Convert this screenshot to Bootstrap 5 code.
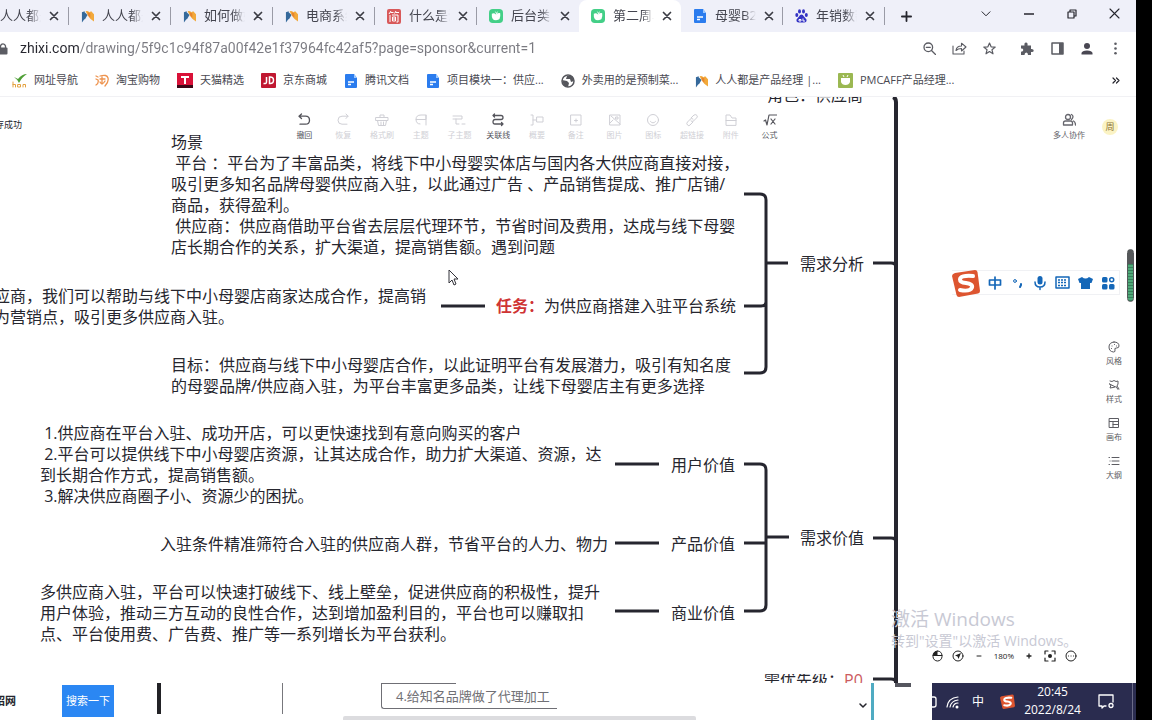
<!DOCTYPE html>
<html lang="zh-CN">
<head>
<meta charset="utf-8">
<meta name="viewport" content="width=device-width, initial-scale=1">
<title>知犀思维导图</title>
<link href="https://cdn.jsdelivr.net/npm/bootstrap@5.3.0/dist/css/bootstrap.min.css" rel="stylesheet">
<style>
  body { background: #000; font-family: "Open Sans", "Noto Sans CJK SC", sans-serif; color: #26262e; }
  button, .plain { background: none; border: 0; padding: 0; color: inherit; }
  svg { display: block; flex: none; }
  .ln { fill: none; stroke: currentColor; stroke-linecap: round; stroke-linejoin: round; }
  .screen { height: 100vh; margin-right: 16px; background: #fff; }

  /* tab strip */
  .tabstrip { height: 32px; background: #eff0f9; }
  .tab { width: 102px; height: 32px; padding-left: 12px; gap: 8px; position: relative; font-size: 13px; color: #44454f; }
  .tab::after { content: ""; position: absolute; right: 0; top: 7px; height: 18px; width: 1px; background: #9a9ba6; }
  .tab.first { width: 69px; padding-left: 0; }
  .tab.current { background: #fff; border-radius: 8px 8px 0 0; }
  .tab.current::after, .tab.quiet::after { display: none; }
  .tab-name { width: 41px; white-space: nowrap; overflow: hidden; -webkit-mask-image: linear-gradient(90deg, #000 70%, transparent); mask-image: linear-gradient(90deg, #000 70%, transparent); }
  .tab-x { color: #3b3c44; }
  .winbtn { width: 43px; height: 27px; }

  /* address row */
  .addr { height: 33px; color: #5b5c63; }
  .url { flex: 1; min-width: 0; font-family: Roboto, "Noto Sans CJK SC", sans-serif; font-size: 14px; border: 0; outline: 0; padding: 0; -webkit-text-fill-color: transparent; background: linear-gradient(90deg, #26262e 59px, #7a7a81 59px); -webkit-background-clip: text; background-clip: text; }
  .addr button { width: 30px; }

  /* bookmarks */
  .marks { height: 31px; gap: 17px; padding-left: 12px; font-size: 11px; }
  .marks a { color: #4a4a52; text-decoration: none; gap: 7px; white-space: nowrap; }

  /* mind map canvas */
  .board { border-top: 1px solid #f1f1f4; }
  .wires { position: absolute; left: 0; top: 0; color: #26262f; }
  .node { position: absolute; font-size: 16px; line-height: 21px; white-space: pre; margin: 0; }
  .n-role { left: 767px; top: -12px; }
  .n-title { left: 171px; top: 35px; }
  .n-scene { left: 171px; top: 56px; }
  .n-help { left: -6px; top: 189px; }
  .n-task { left: 496px; top: 199px; }
  .n-task b { color: #cf3434; }
  .n-goal { left: 171px; top: 258px; }
  .n-need { left: 800px; top: 157px; }
  .n-user { left: 40px; top: 326px; }
  .n-worth { left: 800px; top: 431px; }
  .n-v1 { left: 671px; top: 358px; }
  .n-v2 { left: 671px; top: 437px; }
  .n-v3 { left: 671px; top: 506px; }
  .n-enter { left: 160px; top: 437px; }
  .n-many { left: 40px; top: 485px; }
  .n-rank { left: 764px; top: 577px; height: 9px; line-height: 12px; overflow: hidden; }
  .n-rank span { color: #cc5a60; }

  .saved { position: absolute; left: -5px; top: 22px; font-size: 9px; line-height: 12px; }
  .tools { position: absolute; left: 285px; top: 16px; width: 504px; font-size: 8px; line-height: 12px; }
  .tools button { flex: 1 1 0; color: #cfcfd5; }
  .tools button.on { color: #55555c; }
  .tools svg, .rail svg, .team svg { margin: 0 auto 2px; }
  .team { position: absolute; right: 18px; top: 16px; gap: 17px; font-size: 8px; line-height: 12px; color: #66666d; }
  .face { width: 16px; height: 16px; border-radius: 50%; background: #fbf3c4; color: #8b7436; font-size: 9px; line-height: 16px; }
  .ime { position: absolute; right: 16px; top: 173px; width: 168px; height: 25px; color: #1467b8; border: 1px solid #f0f1f4; border-left: 0; }
  .ime button { width: 23px; }
  .rail { position: absolute; right: 14px; top: 244px; gap: 12px; font-size: 8px; line-height: 12px; color: #5c5c62; }
  .level { position: absolute; right: 2px; top: 152px; width: 7px; height: 53px; border-radius: 4px; border: 1px solid #55585a; background: linear-gradient(#55585a 14px, transparent 14px), repeating-linear-gradient(#4fa878 0 2px, #37805a 2px 3px); }
  .mark-win { position: absolute; left: 891px; top: 508px; color: #c8c9d4; }
  .mark-win p { margin: 0; font-size: 19px; line-height: 28px; white-space: nowrap; }
  .mark-win p + p { font-size: 14px; line-height: 16px; }
  .zoomer { position: absolute; right: 59px; top: 551px; font-size: 8px; line-height: 16px; gap: 9px; color: #222; }
  .pointer { position: absolute; left: 448px; top: 172px; }

  /* bottom strip */
  .strip { height: 37px; position: relative; }
  .site { width: 62px; margin-left: -6px; font-size: 11px; font-weight: 700; white-space: nowrap; margin-right: 6px; }
  .go { width: 52px; height: 32px; margin-top: 2px; background: #2b87f3; color: #fff; font-size: 11px; }
  .bar-a { width: 4px; height: 31px; margin-left: 43px; background: #222226; }
  .bar-b { width: 1px; height: 31px; margin-left: 121px; background: #77777c; }
  .note { width: 176px; height: 26px; margin-left: 98px; border: solid #6f6f75; border-width: 0 0 1px 1px; border-radius: 0 0 0 3px; font-size: 13px; line-height: 26px; padding-left: 14px; color: #707075; position: relative; white-space: nowrap; }
  .note::before { content: ""; position: absolute; left: 0; top: 0; width: 74px; height: 1px; background: #6f6f75; }
  .hscroll { position: absolute; left: 343px; bottom: 0; width: 353px; height: 4px; background: #dcdcdf; border-radius: 2px 2px 0 0; }
  .cyan { width: 3px; margin-left: 4px; margin-right: 21px; background: #4fabc2; }
  .stub { width: 16px; height: 4px; background: #55565f; margin-right: 21px; }
  .tray { width: 204px; background: #2a2c4f; color: #fff; font-size: 12px; }
  .tray time { line-height: 18px; width: 66px; white-space: nowrap; }
  .peek { width: 1px; background: #6a6b87; margin-left: 18px; margin-right: 3px; }
</style>
</head>
<body>
<svg width="0" height="0" class="position-absolute">
  <defs>
    <symbol id="x" viewBox="0 0 10 10"><path class="ln" stroke-width="1.7" d="M1.5 1.5l7 7M8.5 1.5l-7 7"/></symbol>
    <symbol id="pm" viewBox="0 0 14 14"><path fill="#f2a93b" d="M5 2q2-1 4 1l2-1 3 3v8l-4-3-3-4z"/><path fill="#35699b" d="M1 3l3-1v8l-3 4zM4 3l3 3-3 5z"/><path fill="#e8842e" d="M7 3l3 1v5L8 7z"/></symbol>
    <symbol id="doc" viewBox="0 0 14 14"><path fill="#2b7cee" d="M2 0h8l3 4v9q0 1-1 1H2q-1 0-1-1V1q0-1 1-1z"/><path fill="#9cc8ff" d="M10 0v4h3z"/><path stroke="#fff" stroke-width="1.3" d="M4 8h6M4 10.500h3"/></symbol>
    <symbol id="leaf" viewBox="0 0 15 15"><rect width="15" height="15" rx="4" fill="#43cf87"/><path fill="#fff" d="M3 5q3-1 4.500 1q2-2 4.500-1.500Q13 12 7.500 12 2.500 12 3 5z"/><path fill="#fff" d="M6 2l2 2 2-2-2 4z"/></symbol>
    <symbol id="sg" viewBox="0 0 28 28"><path fill="#dd5530" d="M3 4L23 1q2 0 2.500 2L28 22q0 2-2 2.500L7 28q-2 0-2.500-2L0 7q0-2 3-3z"/><path fill="none" stroke="#fff" stroke-width="4" stroke-linecap="round" d="M21 7Q8 6 8 10.500q0 3 6 3.500 7 1 6 4.500Q18 23 8 21"/></symbol>
  </defs>
</svg>

<div class="screen d-flex flex-column overflow-hidden position-relative">
  <header>
    <div class="tabstrip d-flex align-items-center overflow-hidden">
      <div class="tab first d-flex align-items-center"><span class="tab-name">人人都是</span><button class="tab-x" aria-label="关闭"><svg width="10" height="10"><use href="#x"/></svg></button></div>
      <div class="tab d-flex align-items-center"><svg width="13" height="14"><use href="#pm"/></svg><span class="tab-name">人人都是</span><button class="tab-x" aria-label="关闭"><svg width="10" height="10"><use href="#x"/></svg></button></div>
      <div class="tab d-flex align-items-center"><svg width="13" height="14"><use href="#pm"/></svg><span class="tab-name">如何做好</span><button class="tab-x" aria-label="关闭"><svg width="10" height="10"><use href="#x"/></svg></button></div>
      <div class="tab d-flex align-items-center"><svg width="13" height="14"><use href="#pm"/></svg><span class="tab-name">电商系统</span><button class="tab-x" aria-label="关闭"><svg width="10" height="10"><use href="#x"/></svg></button></div>
      <div class="tab d-flex align-items-center"><svg width="14" height="15" viewBox="0 0 14 15"><rect width="14" height="15" rx="2" fill="#d8595a"/><path fill="none" stroke="#fff" d="M4 2L2 5M3.500 3.500h3M9 2L7.500 4.500M8.500 3.500H12M3 6v7M5 6h6v7H9.500M5.500 8h3v4h-3zM5.500 10h3"/></svg><span class="tab-name">什么是淘</span><button class="tab-x" aria-label="关闭"><svg width="10" height="10"><use href="#x"/></svg></button></div>
      <div class="tab quiet d-flex align-items-center"><svg width="14" height="14"><use href="#leaf"/></svg><span class="tab-name">后台类目</span><button class="tab-x" aria-label="关闭"><svg width="10" height="10"><use href="#x"/></svg></button></div>
      <div class="tab current d-flex align-items-center"><svg width="14" height="14"><use href="#leaf"/></svg><span class="tab-name">第二周早</span><button class="tab-x" aria-label="关闭"><svg width="10" height="10"><use href="#x"/></svg></button></div>
      <div class="tab d-flex align-items-center"><svg width="14" height="14"><use href="#doc"/></svg><span class="tab-name">母婴B2B</span><button class="tab-x" aria-label="关闭"><svg width="10" height="10"><use href="#x"/></svg></button></div>
      <div class="tab d-flex align-items-center"><svg width="13" height="14" viewBox="0 0 13 14" fill="#3433c4"><ellipse cx="1.800" cy="6" rx="1.500" ry="2"/><ellipse cx="4.500" cy="2.400" rx="1.500" ry="2.100"/><ellipse cx="8.500" cy="2.400" rx="1.500" ry="2.100"/><ellipse cx="11.300" cy="6" rx="1.500" ry="2"/><path d="M6.500 5.500q1.500 0 2.500 2l2.500 3q.5 3-2.500 3H4q-3 0-2.500-3l2.500-3q1-2 2.500-2z"/><path stroke="#fff" fill="none" d="M4 10.500h2V12H4zM8 9.500v2.500h2"/></svg><span class="tab-name">年销数额</span><button class="tab-x" aria-label="关闭"><svg width="10" height="10"><use href="#x"/></svg></button></div>
      <button class="ms-3" aria-label="新标签页"><svg width="11" height="11" viewBox="0 0 11 11"><path class="ln" stroke-width="1.800" d="M5.500 .9v9.200M.9 5.500h9.200"/></svg></button>
      <div class="ms-auto d-flex align-self-start">
        <button class="winbtn d-flex align-items-center justify-content-center" aria-label="搜索标签页"><svg width="10" height="6" viewBox="0 0 10 6"><path class="ln" d="M1 .8l4 4 4-4"/></svg></button>
        <button class="winbtn d-flex align-items-center justify-content-center" aria-label="最小化"><svg width="10" height="2"><path stroke="currentColor" stroke-width="1.500" d="M0 1h10"/></svg></button>
        <button class="winbtn d-flex align-items-center justify-content-center" aria-label="还原"><svg width="10" height="10" viewBox="0 0 10 10"><path class="ln" stroke-width="1.200" d="M1 3h6v6H1zM3 3V1h6v6H7"/></svg></button>
        <button class="winbtn d-flex align-items-center justify-content-center" aria-label="关闭窗口"><svg width="11" height="11" viewBox="0 0 11 11"><path class="ln" stroke-width="1.100" d="M1 1l9 9M10 1l-9 9"/></svg></button>
      </div>
    </div>

    <div class="addr d-flex align-items-center">
      <svg class="me-2" width="8" height="12" viewBox="0 0 8 12"><path fill="currentColor" d="M0 4.500h6.500q1 0 1 1v5q0 1-1 1H0z"/><path class="ln" stroke-width="1.300" d="M5.500 5V3Q5 .8 3 .8 1 .8 .5 3v2"/></svg>
      <input class="url ms-1" aria-label="地址" value="zhixi.com/drawing/5f9c1c94f87a00f42e1f37964fc42af5?page=sponsor&amp;current=1">
      <button class="d-flex justify-content-center" aria-label="缩放"><svg width="13" height="13" viewBox="0 0 13 13"><g class="ln" stroke-width="1.300"><circle cx="5.300" cy="5.300" r="4.300"/><path d="M8.500 8.500l4 4M3.300 5.300h4"/></g></svg></button>
      <button class="d-flex justify-content-center" aria-label="分享"><svg width="15" height="13" viewBox="0 0 15 13"><path class="ln" stroke-width="1.100" d="M1 4v8h11V9M4 8.500Q4.500 4 9.500 4V1.200L14 5l-4.500 4V6.500Q6 6.500 4 8.500z"/></svg></button>
      <button class="d-flex justify-content-center me-2" aria-label="收藏"><svg width="13" height="13" viewBox="0 0 13 13"><path class="ln" stroke-width="1.200" d="M6.500 1l1.600 3.800 4.100.3L9 7.800l1 4-3.500-2.200L3 11.800l1-4L.8 5.100l4.100-.3z"/></svg></button>
      <button class="d-flex justify-content-center" aria-label="扩展程序"><svg width="14" height="14" viewBox="0 0 14 14"><path fill="currentColor" d="M1 3.500h3.500Q4 .6 6 .6t1.500 2.900H11V7q2.700-.3 2.700 1.600T11 10v3H8q0-2.500-1.700-2.500T4.500 13H1V9.700Q3.300 9.500 3.300 8T1 6.600z"/></svg></button>
      <button class="d-flex justify-content-center" aria-label="侧边栏"><svg width="13" height="13" viewBox="0 0 13 13"><path class="ln" stroke-width="1.500" d="M1 1h11v11H1z"/><path fill="currentColor" d="M8 1h4v11H8z"/></svg></button>
      <button class="d-flex justify-content-center" aria-label="用户"><svg width="14" height="14" viewBox="0 0 14 14" fill="#494752"><circle cx="7" cy="4" r="3"/><path d="M1.500 12.500V11Q2 8.500 7 8.500t5.500 2.500v1.500z"/></svg></button>
      <button class="d-flex justify-content-center me-1 pe-1" aria-label="菜单"><svg width="3" height="13" viewBox="0 0 3 13" fill="currentColor"><circle cx="1.500" cy="1.800" r="1.300"/><circle cx="1.500" cy="6.500" r="1.300"/><circle cx="1.500" cy="11.200" r="1.300"/></svg></button>
    </div>

    <nav class="marks d-flex align-items-center">
      <a class="d-flex align-items-center" href="#"><svg width="15" height="14" viewBox="0 0 15 14"><path fill="#4f9f36" d="M2 3l4 2q4-5 9-5-5 3-8 9Q5 5 2 3z"/><path fill="none" stroke="#e3a13f" stroke-linecap="round" d="M1 8v5M1 10.500h2.500V13M6 10.500h2.500V13H6zM11 13v-2.500h2.500V13"/></svg>网址导航</a>
      <a class="d-flex align-items-center" href="#"><svg width="14" height="13" viewBox="0 0 14 13"><g fill="none" stroke="#ee934e" stroke-width="1.300" stroke-linecap="round"><path d="M1 2l2 1M1 5l2 1M1 11q3-2 2-5M5 2Q12 0 13 4t-3 8M5 5h5M7 3v7M5 8q2 4 5-1"/></g></svg>淘宝购物</a>
      <a class="d-flex align-items-center" href="#"><svg width="16" height="15" viewBox="0 0 16 15"><rect width="16" height="15" fill="#d91138"/><path fill="#3c0716" d="M0 12h16v3H0z"/><path stroke="#fff" stroke-width="2" d="M4 4h8M8 4v7"/></svg>天猫精选</a>
      <a class="d-flex align-items-center" href="#"><svg width="15" height="15" viewBox="0 0 15 15"><rect width="15" height="15" rx="1" fill="#c01831"/><path fill="none" stroke="#fff" stroke-width="1.500" d="M5.500 4v5q0 2-3 1.500M8.500 4v6.500q4 .5 4-3.200T8.500 4z"/></svg>京东商城</a>
      <a class="d-flex align-items-center" href="#"><svg width="14" height="14"><use href="#doc"/></svg>腾讯文档</a>
      <a class="d-flex align-items-center" href="#"><svg width="14" height="14"><use href="#doc"/></svg>项目模块一：供应...</a>
      <a class="d-flex align-items-center" href="#"><svg width="14" height="14" viewBox="0 0 14 14"><circle cx="7" cy="7" r="6" fill="#fff" stroke="#55565c" stroke-width="1.500"/><path fill="#55565c" d="M1 6l5 1 2 2-1 4-4-1zM6 2l5 0 2 5-3 1-1-3-4 0z"/></svg>外卖用的是预制菜...</a>
      <a class="d-flex align-items-center" href="#"><svg width="13" height="14"><use href="#pm"/></svg>人人都是产品经理 |...</a>
      <a class="d-flex align-items-center" href="#"><svg width="15" height="15" viewBox="0 0 15 15"><rect width="15" height="15" rx="1" fill="#9bb852"/><path fill="#fff" d="M3 5h9v4q-1 3-4.500 3T3 9z"/><path stroke="#fff" d="M5 2l1 2M10 2L9 4"/></svg>PMCAFF产品经理...</a>
      <button class="ms-auto me-3" aria-label="更多书签"><svg width="8" height="7" viewBox="0 0 8 7"><path class="ln" stroke-width="1.200" d="M1 1l2.500 2.500L1 6M4.500 1L7 3.500 4.500 6"/></svg></button>
    </nav>
  </header>

  <main class="board flex-grow-1 position-relative overflow-hidden">
    <svg class="wires ln" width="920" height="590" viewBox="0 0 920 590" stroke-width="3">
      <g stroke-linecap="butt">
        <path stroke-width="4" d="M893 0q3 1 3 5v583"/>
        <path d="M873 166h18q5 0 5 4M873 441h18q5 0 5 4M873 582h18q5 0 5 4"/>
        <path d="M744 97h16q6 0 6 6v167q0 6-6 6h-16M744 209h17q5 0 5-4M766 166h22"/>
        <path d="M744 367h16q6 0 6 6v135q0 6-6 6h-16M744 446h22M766 440h23"/>
        <path d="M441 209h44M615 367h44M615 446h44M615 514h44"/>
      </g>
    </svg>

    <p class="node n-role">角色：供应商</p>
    <p class="node n-title">场景</p>
    <p class="node n-scene"> 平台 ：平台为了丰富品类，将线下中小母婴实体店与国内各大供应商直接对接，
吸引更多知名品牌母婴供应商入驻，以此通过广告 、产品销售提成、推广店铺/
商品，获得盈利。
 供应商：供应商借助平台省去层层代理环节，节省时间及费用，达成与线下母婴
店长期合作的关系，扩大渠道，提高销售额。遇到问题</p>
    <p class="node n-help">应商，我们可以帮助与线下中小母婴店商家达成合作，提高销
为营销点，吸引更多供应商入驻。</p>
    <p class="node n-task"><b>任务：</b>为供应商搭建入驻平台系统</p>
    <p class="node n-goal">目标：供应商与线下中小母婴店合作，以此证明平台有发展潜力，吸引有知名度
的母婴品牌/供应商入驻，为平台丰富更多品类，让线下母婴店主有更多选择</p>
    <p class="node n-need">需求分析</p>
    <p class="node n-user"> 1.供应商在平台入驻、成功开店，可以更快速找到有意向购买的客户
 2.平台可以提供线下中小母婴店资源，让其达成合作，助力扩大渠道、资源，达
到长期合作方式，提高销售额。
 3.解决供应商圈子小、资源少的困扰。</p>
    <p class="node n-v1">用户价值</p>
    <p class="node n-v2">产品价值</p>
    <p class="node n-v3">商业价值</p>
    <p class="node n-worth">需求价值</p>
    <p class="node n-enter">入驻条件精准筛符合入驻的供应商人群，节省平台的人力、物力</p>
    <p class="node n-many">多供应商入驻，平台可以快速打破线下、线上壁垒，促进供应商的积极性，提升
用户体验，推动三方互动的良性合作，达到增加盈利目的，平台也可以赚取扣
点、平台使用费、广告费、推广等一系列增长为平台获利。</p>
    <p class="node n-rank">需优先级：<span>P0</span></p>

    <div class="saved">存成功</div>

    <div class="tools d-flex">
      <button class="on"><svg width="14" height="14" viewBox="0 0 14 14"><path class="ln" stroke-width="1.300" d="M4.500 1L2 3.200l2.500 2.300M2 3.200h6.500q4 0 4 4t-4 4H3"/></svg>撤回</button>
      <button><svg width="14" height="14" viewBox="0 0 14 14"><path class="ln" d="M10 1l2 2.200-2 2.300M12 3.200H6q-4 0-4 4t4 4h5"/></svg>恢复</button>
      <button><svg width="14" height="14" viewBox="0 0 14 14"><path class="ln" d="M5 4V2h4v2M1 4.500h12v3H1zM2.500 7.500l1 5h7l1-5M6 9v3M8.500 9v3"/></svg>格式刷</button>
      <button><svg width="14" height="14" viewBox="0 0 14 14"><path class="ln" d="M12 2H7Q2 2 2 6.500h10V2v10M2 6.500Q2 11 6 11"/></svg>主题</button>
      <button><svg width="14" height="14" viewBox="0 0 14 14"><path class="ln" d="M1 3h9v3H1M4 6v5h3M10 11h3"/></svg>子主题</button>
      <button class="on"><svg width="14" height="14" viewBox="0 0 14 14"><path class="ln" stroke-width="1.300" d="M3.500 1L2 2.500 3.500 4M2 2.500h8q2 0 2 2t-2 2H4q-2 0-2 2.300T4 11h8M10.500 9.500L12 11l-1.500 1.500"/></svg>关联线</button>
      <button><svg width="14" height="14" viewBox="0 0 14 14"><path class="ln" d="M1 2h2v10H1M3 7h3M7 4h6v5H7z"/></svg>概要</button>
      <button><svg width="14" height="14" viewBox="0 0 14 14"><path class="ln" d="M2 2h10v10H2zM7 6v3M5.500 7.500h3"/></svg>备注</button>
      <button><svg width="14" height="14" viewBox="0 0 14 14"><path class="ln" d="M2 2h10v10H2zM3 3l9 8M2 10l3-3M8 4h2v2H8z"/></svg>图片</button>
      <button><svg width="14" height="14" viewBox="0 0 14 14"><g class="ln"><circle cx="7" cy="7" r="5.500"/><path d="M4.500 8.500q2.500 3 5 0"/></g></svg>图标</button>
      <button><svg width="14" height="14" viewBox="0 0 14 14"><path class="ln" d="M6 5l3-3q2-1 3 .5T11.500 5l-3 3Q7 9 6 8M8 6Q6.500 5 5.500 6l-3 3Q1 10.500 2.500 12T5 12l3-3"/></svg>超链接</button>
      <button><svg width="14" height="14" viewBox="0 0 14 14"><path class="ln" d="M2 12V2h4l2 3h4v7zM2 7.500h10"/></svg>附件</button>
      <button class="on"><svg width="14" height="14" viewBox="0 0 14 14"><path class="ln" stroke-width="1.200" d="M1 8l1.500-1L4 12 6 2h8M8 6l4 5M12 6l-4 5"/></svg>公式</button>
    </div>

    <div class="team d-flex align-items-center">
      <button><svg width="14" height="14" viewBox="0 0 14 14"><g class="ln" stroke-width="1.300"><circle cx="6" cy="4" r="2.500"/><path d="M1.500 12V10q0-2 2-2h5q2 0 2 2v2zM9.500 1.500q3 2 0 5M11.500 8q2 1 2 4"/></g></svg>多人协作</button>
      <span class="face text-center">周</span>
    </div>

    <div class="ime d-flex align-items-center">
      <svg class="me-1" width="28" height="28"><use href="#sg"/></svg>
      <button class="d-flex justify-content-center" aria-label="中文"><svg width="14" height="14" viewBox="0 0 14 14"><path class="ln" stroke-width="1.700" d="M1.500 4h11v5h-11zM7 1v12"/></svg></button>
      <button class="d-flex justify-content-center" aria-label="标点"><svg width="14" height="14" viewBox="0 0 14 14"><circle class="ln" cx="4" cy="5" r="1.400"/><path class="ln" stroke-width="2" d="M10 8v1l-1 2"/></svg></button>
      <button class="d-flex justify-content-center" aria-label="语音"><svg width="14" height="16" viewBox="0 0 14 16"><rect x="4.500" y="1" width="5" height="8.500" rx="2.500" fill="currentColor"/><path class="ln" stroke-width="1.500" d="M2 7q0 5 5 5t5-5M7 12v2.500"/></svg></button>
      <button class="d-flex justify-content-center" aria-label="键盘"><svg width="15" height="13" viewBox="0 0 15 13"><path class="ln" stroke-width="1.500" d="M1 1h13v11H1z"/><path stroke="currentColor" stroke-width="1.500" stroke-dasharray="2 1" d="M3 4h9M3 6.500h9M3 9.500h9"/></svg></button>
      <button class="d-flex justify-content-center" aria-label="皮肤"><svg width="15" height="14" viewBox="0 0 15 14"><path fill="currentColor" d="M4 1q3.500 3 7 0l4 2-1.500 4H12v6H3V7H1.500L0 3z"/></svg></button>
      <button class="d-flex justify-content-center" aria-label="工具箱"><svg width="14" height="14" viewBox="0 0 14 14" fill="currentColor"><rect x="1" y="1" width="5.500" height="5.500" rx="1.500"/><rect x="1" y="8" width="5.500" height="5.500" rx="1.500"/><rect x="8" y="8" width="5.500" height="5.500" rx="1.500"/><circle class="ln" stroke-width="1.500" cx="10.700" cy="3.800" r="2"/></svg></button>
    </div>

    <div class="rail d-flex flex-column">
      <button><svg width="12" height="12" viewBox="0 0 12 12"><g class="ln"><path d="M6 1q5 0 5 4 0 2-2.500 2T7 9q.5 2-1.500 2Q1 10.500 1 6t5-5z"/><path d="M4 5h.1M6.500 3.500h.1M8.500 5h.1M3.500 7.500h.1"/></g></svg>风格</button>
      <button><svg width="12" height="12" viewBox="0 0 12 12"><path class="ln" d="M2 2l2 .5L6 1.500l2 1 2-.5v3L9 7l2 3M7 8L5 8.500 2 9l1-3-1.500-1zM8 7.500l2 3"/></svg>样式</button>
      <button><svg width="12" height="12" viewBox="0 0 12 12"><path class="ln" d="M1.500 1.500h9v9h-9zM1.500 4.500h9M5 4.500v6M5 7.500h5.500"/></svg>画布</button>
      <button><svg width="12" height="12" viewBox="0 0 12 12"><path class="ln" d="M4 2.500h7M4 6h7M4 9.500h7M1 2.500h.5M2 6h.1M1 9.500h.5"/></svg>大纲</button>
    </div>

    <div class="level"></div>

    <div class="mark-win"><p>激活 Windows</p><p>转到"设置"以激活 Windows。</p></div>

    <div class="zoomer d-flex align-items-center">
      <button aria-label="鼠标模式"><svg width="11" height="12" viewBox="0 0 11 12"><rect class="ln" x="1" y="1" width="9" height="10" rx="4.500"/><path fill="currentColor" d="M5.500 1v4.500H1Q1 1 5.500 1z"/><path class="ln" d="M1 5.500h9"/></svg></button>
      <button aria-label="定位"><svg width="12" height="12" viewBox="0 0 12 12"><circle class="ln" cx="6" cy="6" r="5"/><path fill="currentColor" d="M9 3L6.500 9 5.500 6.500 3 5.500z"/></svg></button>
      <button aria-label="缩小"><svg width="12" height="12" viewBox="0 0 12 12"><path class="ln" d="M4 6h4"/></svg></button>
      <span>180%</span>
      <button aria-label="放大"><svg width="12" height="12" viewBox="0 0 12 12"><path class="ln" stroke-width="1.300" d="M4 6h4M6 4v4"/></svg></button>
      <button aria-label="适应画布"><svg width="12" height="12" viewBox="0 0 12 12"><path class="ln" stroke-width="1.200" d="M1 4V1h3M8 1h3v3M11 8v3H8M4 11H1V8"/><circle cx="6" cy="6" r="2" fill="currentColor"/></svg></button>
      <button aria-label="更多"><svg width="12" height="12" viewBox="0 0 12 12"><circle class="ln" cx="6" cy="6" r="5"/><path class="ln" d="M3.500 6h.1M6 6h.1M8.400 6h.1"/></svg></button>
    </div>

    <svg class="pointer" width="11" height="18" viewBox="0 0 11 18"><path fill="#fff" stroke="#33333a" d="M1 1v13l3-3 2 5 2-1-2-5h4z"/></svg>
  </main>

  <footer class="strip d-flex">
    <span class="site align-self-center">绍网</span>
    <button class="go">搜索一下</button>
    <span class="bar-a"></span>
    <span class="bar-b"></span>
    <div class="note">4.给知名品牌做了代理加工</div>
    <span class="hscroll"></span>
    <button class="ms-auto align-self-center mt-2" aria-label="展开"><svg width="8" height="6" viewBox="0 0 8 6"><path class="ln" stroke-width="1.500" d="M1 1l3 3 3-3"/></svg></button>
    <span class="cyan"></span>
    <span class="stub"></span>
    <div class="tray d-flex align-items-stretch">
      <svg class="align-self-center" width="5" height="12" viewBox="0 0 5 12"><path class="ln" stroke-width="1.300" d="M0 1h2q2 0 2 2v6q0 2-2 2H0"/></svg>
      <svg class="align-self-center ms-2" width="15" height="14" viewBox="0 0 15 14"><path class="ln" stroke-width="1.200" d="M2 12Q3 3 13 2M5 12Q6 6 13 5M8 12q1-4 5-4"/><circle cx="12" cy="12" r="1.500" fill="currentColor"/></svg>
      <span class="align-self-center ms-2 ps-1">中</span>
      <svg class="align-self-center ms-3" width="15" height="15"><use href="#sg"/></svg>
      <time class="text-center ms-2">20:45<br>2022/8/24</time>
      <svg class="align-self-center ms-3" width="16" height="16" viewBox="0 0 16 16"><path class="ln" stroke-width="1.300" d="M8 12H6l-2 2v-2H1V1h14v7"/><circle class="ln" cx="13" cy="11.500" r="2" stroke-width="1.300"/></svg>
      <span class="peek"></span>
    </div>
  </footer>
</div>
<script src="https://cdn.jsdelivr.net/npm/bootstrap@5.3.0/dist/js/bootstrap.bundle.min.js"></script>
</body>
</html>
